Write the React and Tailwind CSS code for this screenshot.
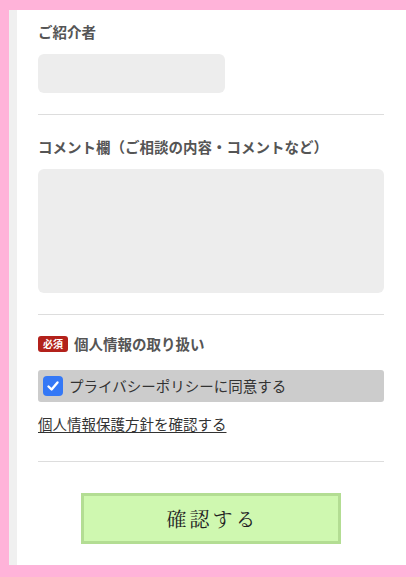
import React, { useState } from 'react';

const jp = { fontFamily: '"Noto Sans CJK JP", "Noto Sans", sans-serif' };

const App = () => {
  const [agreed, setAgreed] = useState(true);

  return (
    <div className="w-[420px] h-[577px] bg-[#ffb3d9] pt-[10px] pl-[9px] pr-[14px] pb-[12px]" style={jp}>
      <div className="h-full border-l-8 border-[#f0f0f0] bg-white pl-[21px] pr-[22px] pt-[11px]">
        <label className="block text-[14.5px] leading-[22px] font-bold text-[#555]">ご紹介者</label>
        <input className="mt-[11px] block w-[187px] h-[39px] rounded-md bg-[#ededed] outline-none px-3" />

        <div className="mt-[21px] h-px bg-[#dddddd]" />

        <label className="mt-[21px] block text-[14.5px] leading-[22px] font-bold text-[#555]">
          コメント欄（ご相談の内容・コメントなど）
        </label>
        <textarea className="mt-[11px] block w-full h-[124px] rounded-md bg-[#ededed] outline-none resize-none p-3" />

        <div className="mt-[21px] h-px bg-[#dddddd]" />

        <div className="mt-[18px] flex items-center gap-[6px] h-[22px]">
          <span className="flex items-center justify-center w-[30px] h-[16px] rounded-[3px] bg-[#b3211b] text-white text-[10px] leading-none font-bold">
            必須
          </span>
          <span className="text-[14.5px] leading-[22px] font-bold text-[#555]">個人情報の取り扱い</span>
        </div>

        <label className="mt-[15px] flex items-center h-[32px] rounded-[3px] bg-[#cccccc] pl-[5px] gap-[6px] cursor-pointer">
          <span
            onClick={() => setAgreed(!agreed)}
            className={`flex items-center justify-center w-[20px] h-[20px] rounded-[4px] ${agreed ? 'bg-[#3478f6]' : 'bg-white border border-gray-400'}`}
          >
            {agreed && (
              <svg width="14" height="14" viewBox="0 0 14 14" fill="none">
                <path d="M2.5 7.5 L5.6 10.5 L11.5 3.5" stroke="white" strokeWidth="2.4" strokeLinecap="round" strokeLinejoin="round" />
              </svg>
            )}
          </span>
          <span className="text-[14.5px] leading-[20px] text-[#333]">プライバシーポリシーに同意する</span>
        </label>

        <a href="#" className="mt-[12px] block w-fit text-[14.5px] leading-[20px] text-[#333] underline underline-offset-2">
          個人情報保護方針を確認する
        </a>

        <div className="mt-[27px] h-px bg-[#dddddd]" />

        <div className="mt-[31px] flex justify-center">
          <button
            className="w-[260px] h-[51px] bg-[#cff8b0] border-[3px] border-[#b3dd93] text-[20px] tracking-[3px] pl-[3px] text-[#222]"
            style={{ fontFamily: '"Noto Serif CJK JP", "Liberation Serif", serif' }}
          >
            確認する
          </button>
        </div>
      </div>
    </div>
  );
};

export default App;
